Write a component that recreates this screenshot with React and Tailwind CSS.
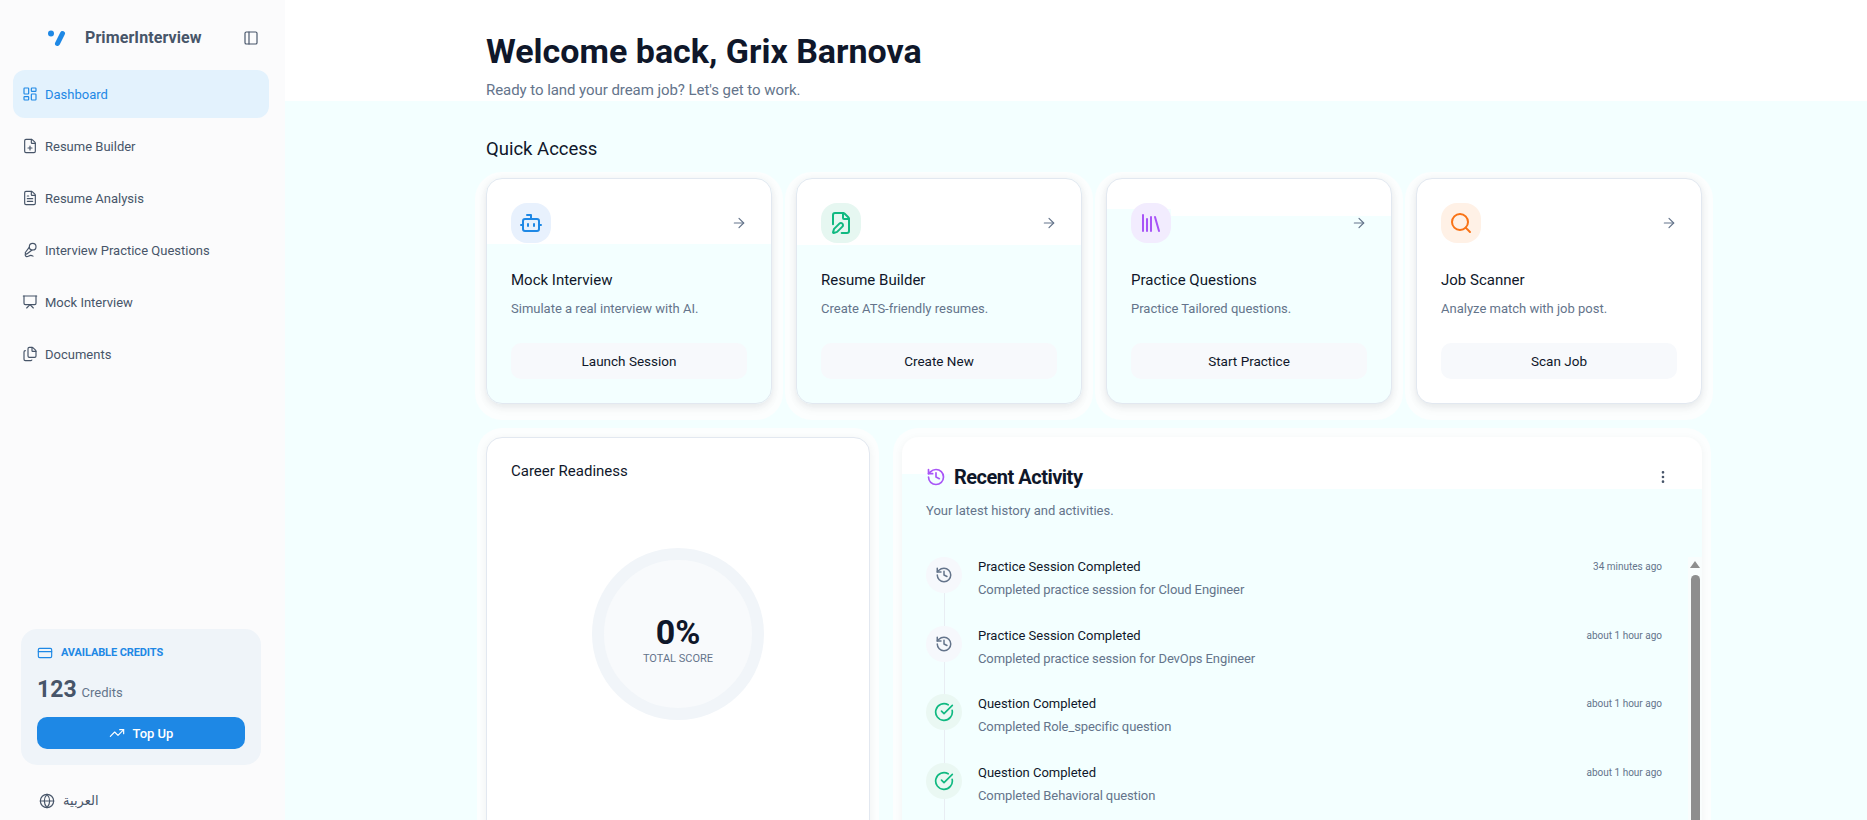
import React from "react";
import { LayoutDashboard, FilePlus, FileText, MicVocal, Presentation, Files, PanelLeft, Bot, FilePen, Library, Search, ArrowRight, History, EllipsisVertical, CircleCheckBig, CreditCard, TrendingUp, Globe } from "lucide-react";

const nav = [
  [LayoutDashboard, "Dashboard", true],
  [FilePlus, "Resume Builder"],
  [FileText, "Resume Analysis"],
  [MicVocal, "Interview Practice Questions"],
  [Presentation, "Mock Interview"],
  [Files, "Documents"],
];

const cards = [
  { Icon: Bot, title: "Mock Interview", desc: "Simulate a real interview with AI.", btn: "Launch Session", box: "bg-[#e8f1fd]", ic: "text-[#1e88e5]", bg: "bg-[linear-gradient(#fff_0,#fff_65px,#f3ffff_65px)]" },
  { Icon: FilePen, title: "Resume Builder", desc: "Create ATS-friendly resumes.", btn: "Create New", box: "bg-[#e6f7f1]", ic: "text-[#10b981]", bg: "bg-[linear-gradient(#fff_0,#fff_66px,#f3ffff_66px)]" },
  { Icon: Library, title: "Practice Questions", desc: "Practice Tailored questions.", btn: "Start Practice", box: "bg-[#f2ecfe]", ic: "text-[#a855f7]", bg: "[background:linear-gradient(#fff,#fff)_no-repeat_0_0/100%_30px,linear-gradient(90deg,#f3ffff_64px,#fff_64px)_no-repeat_0_0/100%_37px,#f3ffff]" },
  { Icon: Search, title: "Job Scanner", desc: "Analyze match with job post.", btn: "Scan Job", box: "bg-[#fff1e6]", ic: "text-[#f97316]", bg: "bg-white" },
];

const items = [
  { Icon: History, size: "size-[18px]", title: "Practice Session Completed", desc: "Completed practice session for Cloud Engineer", time: "34 minutes ago", box: "bg-[#f6f8fc]", ic: "text-[#64748b]" },
  { Icon: History, size: "size-[18px]", title: "Practice Session Completed", desc: "Completed practice session for DevOps Engineer", time: "about 1 hour ago", box: "bg-[#f6f8fc]", ic: "text-[#64748b]" },
  { Icon: CircleCheckBig, size: "size-5", title: "Question Completed", desc: "Completed Role_specific question", time: "about 1 hour ago", box: "bg-[#eaf8f3]", ic: "text-[#10b981]" },
  { Icon: CircleCheckBig, size: "size-5", title: "Question Completed", desc: "Completed Behavioral question", time: "about 1 hour ago", box: "bg-[#eaf8f3]", ic: "text-[#10b981]" },
];

function Logo() {
  return (
    <svg width="20" height="17" viewBox="0 0 20 17" className="shrink-0">
      <circle cx="4" cy="3.5" r="3" fill="#1e88e5" />
      <line x1="10.5" y1="13.5" x2="15.5" y2="3.5" stroke="#1e88e5" strokeWidth="5" strokeLinecap="round" />
    </svg>
  );
}

export default function App() {
  return (
    <div className="flex h-screen overflow-hidden bg-white font-['Roboto',sans-serif] text-[#0f172a]">
      <aside className="flex w-[285px] shrink-0 flex-col bg-[#fbfbfc] pb-[7px]">
        <div className="flex h-[70px] items-center pl-[47px] pr-[26px] pt-[6px]">
          <Logo />
          <span className="ml-[18px] text-[16px] font-bold tracking-[0.1px] text-[#475569]">PrimerInterview</span>
          <PanelLeft className="ml-auto size-[16px] text-[#475569]" strokeWidth={1.75} />
        </div>
        <nav className="flex w-[256px] ml-[13px] flex-col gap-1">
          {nav.map(([Icon, label, active]) => (
            <div key={label} className={`flex h-[48px] items-center gap-[7px] rounded-xl px-[9px] text-[13px] ${active ? "bg-[#e3f2fd] text-[#1e88e5]" : "text-[#475569]"}`}>
              <Icon className="size-4 shrink-0" strokeWidth={1.75} />
              <span className="pt-[1px]">{label}</span>
            </div>
          ))}
        </nav>
        <div className="ml-[21px] mt-auto w-[240px] rounded-2xl bg-[#eff4f9] p-4">
          <div className="flex h-4 items-center gap-[8px] text-[#1e88e5]">
            <CreditCard className="size-4" strokeWidth={1.75} />
            <span className="text-[11px] font-bold tracking-[-0.1px]">AVAILABLE CREDITS</span>
          </div>
          <div className="mt-[13px] flex items-baseline gap-[5px]">
            <span className="text-[23px] font-bold leading-8 text-[#475569]">123</span>
            <span className="text-[13px] text-[#64748b]">Credits</span>
          </div>
          <div className="mt-[11px] flex h-8 items-center justify-center gap-[8px] rounded-[10px] bg-[#1e88e5] text-[13px] font-medium text-white">
            <TrendingUp className="size-[16px]" strokeWidth={1.75} />
            <span className="pt-[1px]">Top Up</span>
          </div>
        </div>
        <div className="mt-6 flex h-[24px] items-center gap-[8px] pl-[39px] text-[#475569]">
          <Globe className="size-4" strokeWidth={1.75} />
          <span className="font-['DejaVu_Sans',sans-serif] text-[13px]">العربية</span>
        </div>
      </aside>

      <main className="flex min-w-0 flex-1 flex-col">
        <header className="h-[101px] shrink-0 bg-white pl-[201px] pt-[29px]">
          <h1 className="text-[34px] font-bold leading-[44px] text-[#0f172a]">Welcome back, Grix Barnova</h1>
          <p className="mt-[7px] text-[15px] leading-5 tracking-[-0.06px] text-[#64748b]">Ready to land your dream job? Let's get to work.</p>
        </header>
        <div className="flex-1 bg-[#f3ffff] pl-[201px] pt-[34px]">
          <div className="w-[1216px]">
            <h2 className="text-[18.5px] leading-7 text-[#0f172a]">Quick Access</h2>
            <div className="mt-[15px] grid grid-cols-4 gap-6">
              {cards.map((c) => (
                <div key={c.title} className={`rounded-2xl border border-[#e2e8f0] p-6 shadow-[0_2px_8px_rgba(15,23,42,0.09),0_6px_14px_rgba(15,23,42,0.02),0_5px_0_11px_#fcfefe] ${c.bg}`}>
                  <div className="flex items-center justify-between">
                    <div className={`flex size-10 items-center justify-center rounded-2xl ${c.box}`}>
                      <c.Icon className={`size-6 ${c.ic}`} strokeWidth={2} />
                    </div>
                    <ArrowRight className="size-4 text-[#64748b]" strokeWidth={1.75} />
                  </div>
                  <div className="mt-[25px] text-[15px] leading-6 text-[#0f172a]">{c.title}</div>
                  <div className="mt-[7px] text-[13px] leading-5 text-[#64748b]">{c.desc}</div>
                  <div className="mt-6 flex h-9 items-center justify-center rounded-[10px] bg-[#f7f9fc] text-[13.5px] text-[#0f172a]">{c.btn}</div>
                </div>
              ))}
            </div>
            <div className="mt-[33px] grid grid-cols-3 gap-8">
              <div className="h-[500px] rounded-2xl border border-[#e2e8f0] bg-white px-6 pt-[21px] shadow-[0_2px_8px_rgba(15,23,42,0.06),0_0_0_9px_#fcfefe]">
                <div className="text-[15px] leading-6 text-[#0f172a]">Career Readiness</div>
                <div className="mt-[65px] flex justify-center">
                  <div className="flex size-[172px] flex-col items-center justify-center rounded-full border-[12px] border-[#f1f5f9] bg-[#f8fafc] pt-[11px]">
                    <span className="text-[34px] font-bold leading-[38px] text-[#0f172a]">0%</span>
                    <span className="text-[11px] leading-4 text-[#64748b]">TOTAL SCORE</span>
                  </div>
                </div>
              </div>
              <div className="col-span-2 h-[500px] rounded-2xl pl-6 pt-[26px] shadow-[0_2px_8px_rgba(15,23,42,0.05),0_0_0_9px_#fcfefe] [background:linear-gradient(#fff,#fff)_no-repeat_0_0/100%_37px,linear-gradient(90deg,#f3ffff_48px,#fff_48px)_no-repeat_0_0/100%_52px,#f3ffff]">
                <div className="flex items-center pr-[39px]">
                  <History className="size-5 text-[#a855f7]" strokeWidth={2} />
                  <span className="ml-2 text-[20px] font-bold leading-7 tracking-[-0.5px] text-[#0f172a]">Recent Activity</span>
                  <EllipsisVertical className="ml-auto mr-[-8px] size-4 text-[#475569]" strokeWidth={2} />
                </div>
                <p className="mt-[10px] text-[13px] leading-5 text-[#64748b]">Your latest history and activities.</p>
                <div className="relative mt-[36px] flex flex-col pr-[40px]">
                  {items.map((it, i) => (
                    <div key={i} className="relative flex h-[68.67px] shrink-0">
                      <div className="absolute left-[18px] top-[36px] h-[33px] w-[1px] bg-[#e8edf3]" />
                      <div className={`flex size-9 shrink-0 items-center justify-center rounded-full ${it.box}`}>
                        <it.Icon className={`${it.size} ${it.ic}`} strokeWidth={2} />
                      </div>
                      <div className="ml-4 min-w-0 flex-1">
                        <div className="flex items-center justify-between">
                          <span className="text-[13px] leading-5 text-[#0f172a]">{it.title}</span>
                          <span className="text-[10px] leading-5 text-[#64748b]">{it.time}</span>
                        </div>
                        <div className="mt-[3px] text-[13px] leading-5 tracking-[-0.1px] text-[#64748b]">{it.desc}</div>
                      </div>
                    </div>
                  ))}
                  <div className="absolute right-0 top-0 flex h-[400px] w-[14px] flex-col items-center bg-[#f9fdfd]">
                    <div className="mt-[4px] h-0 w-0 border-x-[5px] border-b-[7px] border-x-transparent border-b-[#8e8e8e]" />
                    <div className="mt-[7px] h-[380px] w-[9px] rounded-full bg-[#8e8e8e]" />
                  </div>
                </div>
              </div>
            </div>
          </div>
        </div>
      </main>
    </div>
  );
}
